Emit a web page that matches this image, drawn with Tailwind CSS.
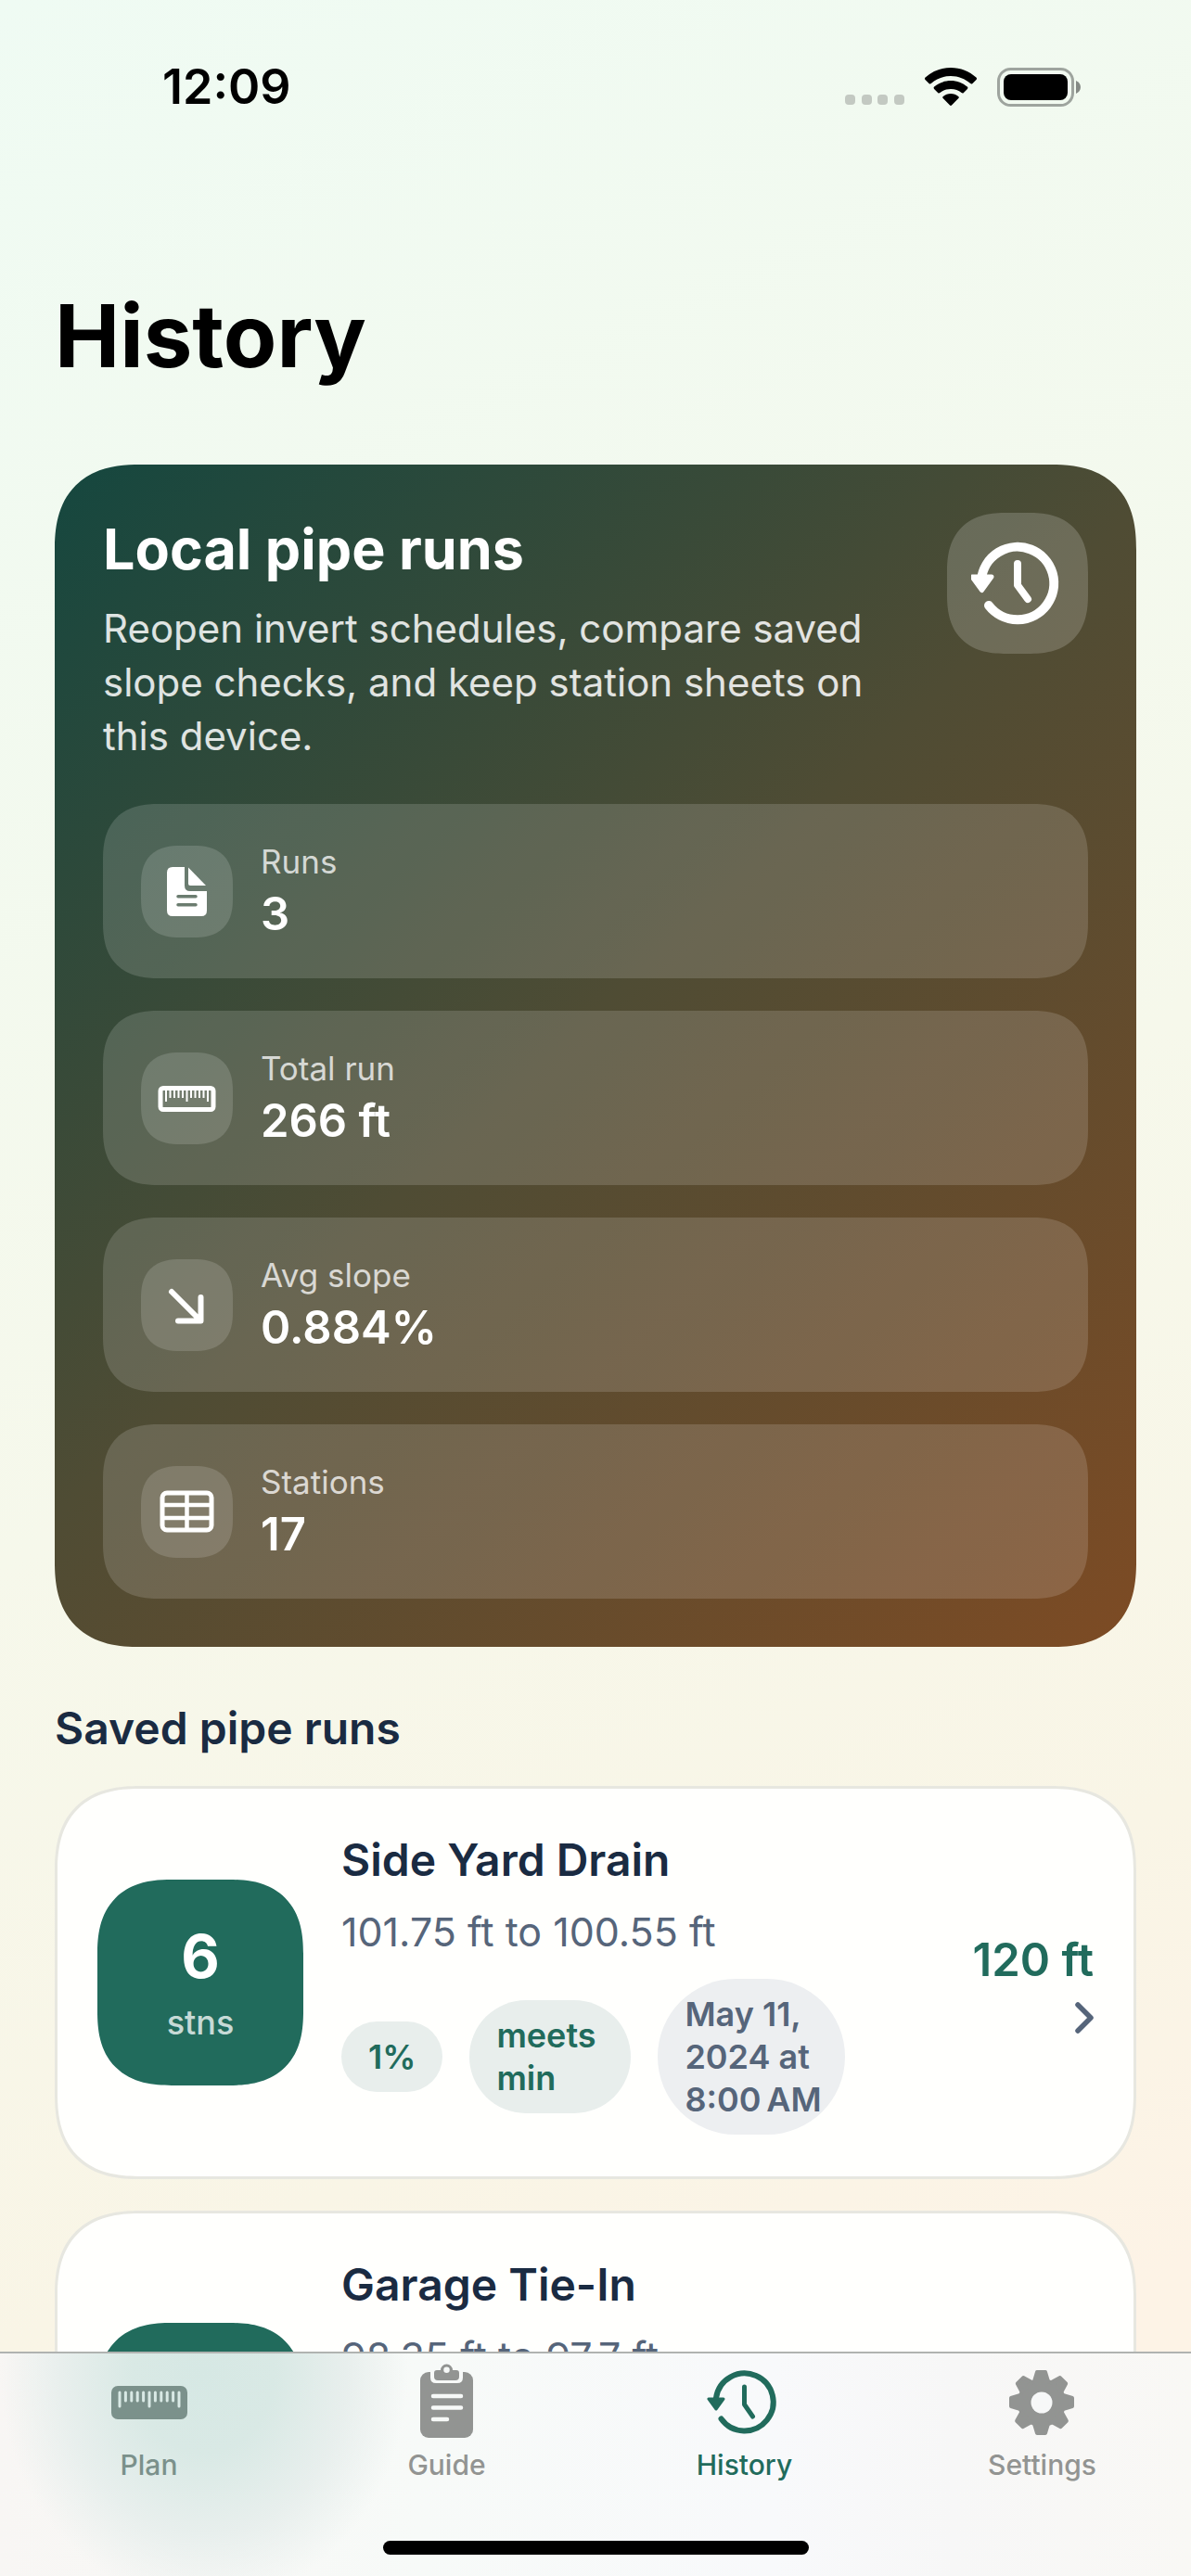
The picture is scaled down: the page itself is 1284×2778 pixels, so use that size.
<!DOCTYPE html>
<html lang="en">
<head>
    <meta charset="UTF-8">
    <meta name="viewport" content="width=device-width, initial-scale=1.0">
    <title>History</title>
    <script src="https://cdn.jsdelivr.net/npm/@tailwindcss/browser@4"></script>
</head>
<body class="font-['Inter',sans-serif]">
    <div class="flex h-screen flex-col bg-[linear-gradient(155deg,#effbf3_0%,#f6f8eb_50%,#f9f5e6_75%,#fdf3e6_90%)]">

        <!-- Status bar -->
        <header class="flex shrink-0 items-center justify-between pl-[175px] pr-[119px] pt-16">
            <time class="text-[52px] leading-[60px] font-semibold">12:09</time>
            <div class="flex items-end gap-[22px]">
                <svg class="w-16 h-[13px]" viewBox="0 0 64 13" fill="#c3c9c2" aria-hidden="true">
                    <rect width="11" height="11" rx="4"/><rect x="18" width="11" height="11" rx="4"/><rect x="35" width="11" height="11" rx="4"/><rect x="53" width="11" height="11" rx="4"/>
                </svg>
                <svg class="w-14 h-[42px]" viewBox="0 0 56 42" aria-hidden="true">
                    <path d="M28 0C17.500 0 8 4 0.600 10.500c-.8.7-.8 1.600-.1 2.400l4 4c.7.7 1.500.7 2.300.1C12.500 12 19.600 9 28 9s15.500 3 21.200 8c.8.6 1.600.6 2.300-.1l4-4c.7-.8.7-1.700-.1-2.400C48 4 38.500 0 28 0z"/>
                    <path d="M28 14c-6.800 0-13 2.500-17.800 6.600-.8.7-.8 1.600-.1 2.300l4 4c.7.700 1.500.7 2.300.1 3.100-2.500 7-4 11.600-4s8.500 1.500 11.600 4c.8.6 1.600.6 2.300-.1l4-4c.7-.7.7-1.600-.1-2.300C41 16.500 34.800 14 28 14z"/>
                    <path d="M28 28c-3.100 0-6 1.100-8.200 2.900-.8.700-.8 1.500-.1 2.200l7.100 7.200c.8.8 1.600.8 2.400 0l7.100-7.200c.7-.7.7-1.500-.1-2.200C34 29.100 31.100 28 28 28z"/>
                </svg>
                <svg class="w-[90px] h-[42px]" viewBox="0 0 90 42" aria-hidden="true">
                    <rect x="1.500" y="1.500" width="80" height="39" rx="13" fill="none" stroke="#9ea49e" stroke-width="3"/>
                    <rect x="7" y="7" width="69" height="28" rx="8"/>
                    <path d="M85 14c3 1.200 5 3.700 5 7s-2 5.800-5 7z" fill="#858a85"/>
                </svg>
            </div>
        </header>

        <main class="min-h-0 flex-1 overflow-hidden px-[59px] pt-[178px]">
            <h1 class="text-[94px] leading-[120px] font-bold">History</h1>

            <!-- Summary -->
            <section class="mt-[79px] rounded-[92px] [corner-shape:superellipse(1.3)] p-[52px] text-white bg-[linear-gradient(137deg,#15473f,#4f4c34_48%,#7d4b24)]">
                <div class="flex justify-between">
                    <div class="w-[840px]">
                        <h2 class="text-[61px] leading-[78px] font-bold">Local pipe runs</h2>
                        <p class="mt-[18px] text-[42px] leading-[58px] text-white/85">Reopen invert schedules, compare saved slope checks, and keep station sheets on this device.</p>
                    </div>
                    <div class="flex size-[152px] items-center justify-center rounded-[64px] [corner-shape:superellipse(1.3)] bg-white/18">
                        <svg class="size-[100px]" viewBox="0 0 100 100" fill="none" stroke="currentColor" stroke-linecap="round" stroke-linejoin="round" aria-hidden="true">
                            <path d="M11 46a39.200 39.200 0 1 1 8 28" stroke-width="10"/>
                            <path d="M50 29v23l11 15" stroke-width="8"/>
                            <path d="M1 43h21L11.500 57.500z" fill="currentColor" stroke-width="5"/>
                        </svg>
                    </div>
                </div>

                <dl class="mt-11 grid gap-[35px]">
                    <div class="flex items-center gap-[30px] rounded-[60px] [corner-shape:superellipse(1.3)] bg-white/15 px-[41px] py-[37px]">
                        <svg class="size-[99px] rounded-[42px] [corner-shape:superellipse(1.3)] bg-white/15" viewBox="0 0 99 99" fill="currentColor" aria-hidden="true">
                            <path fill-rule="evenodd" d="M34 23h13v20q0 6 6 6h18v21q0 6-6 6H34q-6 0-6-6V29q0-6 6-6zm6 30a1.700 1.700 0 0 0 0 3.500h19a1.700 1.700 0 0 0 0-3.500zm0 9a1.700 1.700 0 0 0 0 3.500h19a1.700 1.700 0 0 0 0-3.500z"/>
                            <path d="M51 23.500l19 19.500H53q-2 0-2-2z"/>
                        </svg>
                        <div>
                            <dt class="text-[35px] leading-[50px] text-white/75">Runs</dt>
                            <dd class="text-[49px] leading-[64px] font-semibold">3</dd>
                        </div>
                    </div>
                    <div class="flex items-center gap-[30px] rounded-[60px] [corner-shape:superellipse(1.3)] bg-white/15 px-[41px] py-[37px]">
                        <svg class="size-[99px] rounded-[42px] [corner-shape:superellipse(1.3)] bg-white/15" viewBox="0 0 99 99" fill="none" stroke="currentColor" aria-hidden="true">
                            <rect x="21" y="38.500" width="57" height="23" rx="3" stroke-width="5"/>
                            <path d="M27 39v14M49.500 39v14M72 39v14M31.500 39v10M36 39v10M40.500 39v10M45 39v10M54 39v10M58.500 39v10M63 39v10M67.500 39v10" stroke-width="2"/>
                        </svg>
                        <div>
                            <dt class="text-[35px] leading-[50px] text-white/75">Total run</dt>
                            <dd class="text-[49px] leading-[64px] font-semibold">266 ft</dd>
                        </div>
                    </div>
                    <div class="flex items-center gap-[30px] rounded-[60px] [corner-shape:superellipse(1.3)] bg-white/15 px-[41px] py-[37px]">
                        <svg class="size-[99px] rounded-[42px] [corner-shape:superellipse(1.3)] bg-white/15" viewBox="0 0 99 99" fill="none" stroke="currentColor" stroke-width="6" stroke-linecap="round" stroke-linejoin="round" aria-hidden="true">
                            <path d="M33 35l31 31M64.500 41v25.500H40"/>
                        </svg>
                        <div>
                            <dt class="text-[35px] leading-[50px] text-white/75">Avg slope</dt>
                            <dd class="text-[49px] leading-[64px] font-semibold">0.884%</dd>
                        </div>
                    </div>
                    <div class="flex items-center gap-[30px] rounded-[60px] [corner-shape:superellipse(1.3)] bg-white/15 px-[41px] py-[37px]">
                        <svg class="size-[99px] rounded-[42px] [corner-shape:superellipse(1.3)] bg-white/15" viewBox="0 0 99 99" fill="none" stroke="currentColor" stroke-width="5" aria-hidden="true">
                            <rect x="23" y="29" width="53" height="40" rx="5"/>
                            <path d="M23 42h53M23 56h53M49.500 29v40" stroke-width="4.500"/>
                        </svg>
                        <div>
                            <dt class="text-[35px] leading-[50px] text-white/75">Stations</dt>
                            <dd class="text-[49px] leading-[64px] font-semibold">17</dd>
                        </div>
                    </div>
                </dl>
            </section>

            <!-- Saved runs -->
            <h2 class="mt-14 text-5xl leading-[64px] font-semibold text-[#1a2b42]">Saved pipe runs</h2>
            <ul class="mt-[30px] grid gap-[34px]">
                <li>
                    <a href="#" class="flex items-center rounded-[92px] [corner-shape:superellipse(1.3)] border-[3px] border-[#e7e7e0] bg-[#fffffd] px-[43px] py-[45px]">
                        <div class="flex size-[222px] shrink-0 flex-col items-center justify-center rounded-[80px] [corner-shape:superellipse(1.3)] bg-[#216b5c] text-white">
                            <span class="text-[64px] leading-[86px] font-bold">6</span>
                            <span class="text-4xl leading-[56px] font-medium text-white/75">stns</span>
                        </div>
                        <div class="ml-[41px]">
                            <h3 class="text-5xl leading-[64px] font-semibold text-[#1a2b42]">Side Yard Drain</h3>
                            <p class="mt-4 text-[43px] leading-[58px] text-[#56657a]">101.75 ft to 100.55 ft</p>
                            <div class="mt-[22px] flex items-center gap-[29px] text-4xl leading-[46px] font-semibold">
                                <span class="rounded-[38px] bg-[#e8eeec] px-[29px] py-[15px] text-[#216b5c]">1%</span>
                                <span class="w-[174px] rounded-[62px] bg-[#e8eeec] px-[29px] py-[15px] text-[#216b5c]">meets min</span>
                                <span class="w-[202px] rounded-[84px] bg-[#edeff1] py-[15px] pl-[29px] text-[#56657a]">May 11,<br>2024 at<br>8:00&#8239;AM</span>
                            </div>
                        </div>
                        <div class="ml-auto flex flex-col items-end gap-3">
                            <span class="text-[49px] leading-[64px] font-semibold text-[#216b5c]">120 ft</span>
                            <svg class="w-5 h-9" viewBox="0 0 20 36" fill="none" stroke="#56657a" stroke-width="5.500" stroke-linecap="round" stroke-linejoin="round" aria-hidden="true"><path d="M3 4l14 14L3 32"/></svg>
                        </div>
                    </a>
                </li>
                <li>
                    <a href="#" class="flex items-center rounded-[92px] [corner-shape:superellipse(1.3)] border-[3px] border-[#e7e7e0] bg-[#fffffd] px-[43px] py-[45px]">
                        <div class="size-[222px] shrink-0 rounded-[80px] [corner-shape:superellipse(1.3)] bg-[#216b5c]"></div>
                        <div class="ml-[41px] min-h-[368px]">
                            <h3 class="text-5xl leading-[64px] font-semibold text-[#1a2b42]">Garage Tie-In</h3>
                            <p class="mt-4 text-[43px] leading-[58px] text-[#56657a]">98.35 ft to 97.7 ft</p>
                        </div>
                    </a>
                </li>
            </ul>
        </main>

        <nav class="shrink-0 border-t-2 border-[#b0b3b1] bg-[#f8f8f7] bg-[radial-gradient(220px_250px_at_220px_20px,#d6e8e4,#d9e9e5_35%,#e8efed_70%,transparent),linear-gradient(90deg,#f8f6f4,#f7faf8_35%,#f8f9fb_65%,#f7f7f7_80%,#f9f8f5)] pb-[23px]">
            <div class="grid grid-cols-4 text-3xl leading-10 font-medium text-[#929492]">
                <a href="#" class="flex flex-col items-center pt-2 text-[#7b918b]">
                    <svg class="size-[90px]" viewBox="0 0 90 90" aria-hidden="true">
                        <rect x="4" y="27" width="82" height="36" rx="7" fill="currentColor"/>
                        <path d="M13 34v15M45 34v15M77 34v15M19.400 34v9M25.800 34v9M32.200 34v9M38.600 34v9M51.400 34v9M57.800 34v9M64.200 34v9M70.600 34v9" stroke="#d9e9e5" stroke-width="3" stroke-linecap="round"/>
                    </svg>
                    <span class="mt-0.5">Plan</span>
                </a>
                <a href="#" class="flex flex-col items-center pt-2">
                    <svg class="size-[90px]" viewBox="0 0 90 90" aria-hidden="true">
                        <rect x="16" y="12" width="57" height="71" rx="9" fill="currentColor"/>
                        <path d="M27 10h35v8q0 6-6 6H33q-6 0-6-6z" fill="#f7f9f8"/>
                        <path fill-rule="evenodd" d="M34 10h4a6.500 6.500 0 0 1 13 0h4q3 0 3 3v4q0 4-4 4H35q-4 0-4-4v-4q0-3 3-3zm10.500-3.500a3 3 0 1 0 0 6.500 3 3 0 0 0 0-6.500z" fill="currentColor"/>
                        <path d="M30 38h30M30 50.500h30M30 63h15" stroke="#f7f9f8" stroke-width="4.500" stroke-linecap="round"/>
                    </svg>
                    <span class="mt-0.5">Guide</span>
                </a>
                <a href="#" aria-current="page" class="flex flex-col items-center pt-2 text-[#216b5c]">
                    <svg class="size-[90px]" viewBox="0 0 90 90" fill="none" stroke="currentColor" stroke-linecap="round" stroke-linejoin="round" aria-hidden="true">
                        <path d="M14 40a31 31 0 1 1 5.500 22.500" stroke-width="6"/>
                        <path d="M44.500 28v19l9 13" stroke-width="5"/>
                        <path d="M6 41h16l-8 11z" fill="currentColor" stroke-width="3"/>
                    </svg>
                    <span class="mt-0.5">History</span>
                </a>
                <a href="#" class="flex flex-col items-center pt-2">
                    <svg class="size-[90px]" viewBox="0 0 90 90" aria-hidden="true">
                        <g fill="currentColor" stroke="currentColor" stroke-width="4" stroke-linejoin="round">
                            <circle cx="44" cy="45" r="24"/>
                            <path id="tooth" d="M36 22l3-10h9l3 10zM36 68l3 10h9l3-10z"/>
                            <use href="#tooth" transform="rotate(45 44 45)"/>
                            <use href="#tooth" transform="rotate(90 44 45)"/>
                            <use href="#tooth" transform="rotate(135 44 45)"/>
                        </g>
                        <circle cx="44" cy="45" r="11.500" fill="#f7f8f8"/>
                    </svg>
                    <span class="mt-0.5">Settings</span>
                </a>
            </div>
            <div class="mx-auto mt-[62px] h-[15px] w-[459px] rounded-full bg-black"></div>
        </nav>
    </div>
</body>
</html>
